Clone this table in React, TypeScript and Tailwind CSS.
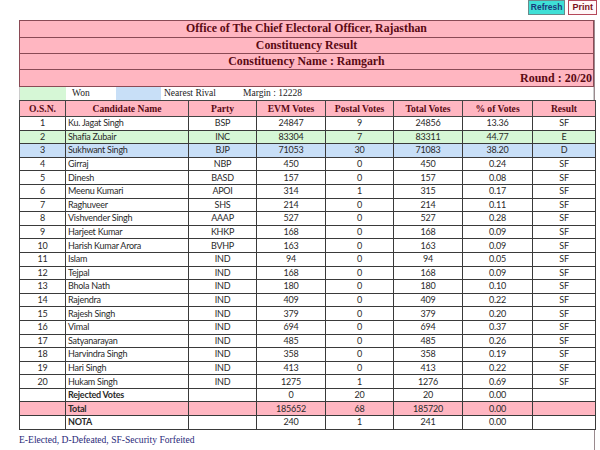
import React from "react";

type Row = [number, string, string, number, number, number, string, string];

const rows: Row[] = [
  [1, "Ku. Jagat Singh", "BSP", 24847, 9, 24856, "13.36", "SF"],
  [2, "Shafia Zubair", "INC", 83304, 7, 83311, "44.77", "E"],
  [3, "Sukhwant Singh", "BJP", 71053, 30, 71083, "38.20", "D"],
  [4, "Girraj", "NBP", 450, 0, 450, "0.24", "SF"],
  [5, "Dinesh", "BASD", 157, 0, 157, "0.08", "SF"],
  [6, "Meenu Kumari", "APOI", 314, 1, 315, "0.17", "SF"],
  [7, "Raghuveer", "SHS", 214, 0, 214, "0.11", "SF"],
  [8, "Vishvender Singh", "AAAP", 527, 0, 527, "0.28", "SF"],
  [9, "Harjeet Kumar", "KHKP", 168, 0, 168, "0.09", "SF"],
  [10, "Harish Kumar Arora", "BVHP", 163, 0, 163, "0.09", "SF"],
  [11, "Islam", "IND", 94, 0, 94, "0.05", "SF"],
  [12, "Tejpal", "IND", 168, 0, 168, "0.09", "SF"],
  [13, "Bhola Nath", "IND", 180, 0, 180, "0.10", "SF"],
  [14, "Rajendra", "IND", 409, 0, 409, "0.22", "SF"],
  [15, "Rajesh Singh", "IND", 379, 0, 379, "0.20", "SF"],
  [16, "Vimal", "IND", 694, 0, 694, "0.37", "SF"],
  [17, "Satyanarayan", "IND", 485, 0, 485, "0.26", "SF"],
  [18, "Harvindra Singh", "IND", 358, 0, 358, "0.19", "SF"],
  [19, "Hari Singh", "IND", 413, 0, 413, "0.22", "SF"],
  [20, "Hukam Singh", "IND", 1275, 1, 1276, "0.69", "SF"],
];

const cols = ["O.S.N.", "Candidate Name", "Party", "EVM Votes", "Postal Votes", "Total Votes", "% of Votes", "Result"];
const widths = ["w-[46px]", "w-[123px]", "w-[68px]", "w-[69px]", "w-[68px]", "w-[69px]", "w-[70px]", "w-[63px]"];

const cell =
  "border border-[#3a3a3a] h-[13.6px] p-0 leading-[12px] text-[9px] tracking-[-0.25px] text-[#2a2a2a] font-['Lato',sans-serif]";

const App = () => {
  return (
    <div className="relative w-[600px] h-[450px] bg-white overflow-hidden">
      {/* buttons */}
      <div className="flex justify-end gap-[3px] pr-[3px] h-[20px] items-start">
        <button className="h-[15px] px-[2px] bg-[#3fe0d6] border border-[#6a8a8a] text-[#1a3a7a] text-[8.5px] leading-[13px] font-bold font-['Liberation_Sans',sans-serif]">
          Refresh
        </button>
        <button className="h-[15px] px-[3px] bg-[#fff7f8] border border-[#b5485a] text-[#7a1020] text-[9px] leading-[13px] font-bold font-['Liberation_Sans',sans-serif]">
          Print
        </button>
      </div>

      <div className="ml-[19px] w-[576px] border-r border-[#9a8a8e] h-[430px]">
        {/* title block */}
        <div className="bg-[#ffb6c1] border border-[#8a4a55] font-['Liberation_Serif',serif] font-bold text-[#5a0a14]">
          <div className="h-[17px] flex items-center justify-center text-[11.8px] border-b border-[#8a4a55]">
            Office of The Chief Electoral Officer, Rajasthan
          </div>
          <div className="h-[16px] flex items-center justify-center text-[11.8px] border-b border-[#8a4a55]">
            Constituency Result
          </div>
          <div className="h-[16px] flex items-center justify-center text-[11.8px] border-b border-[#8a4a55]">
            Constituency Name : Ramgarh
          </div>
          <div className="h-[16px] flex items-center justify-end pr-[1px] text-[12px]">
            Round : 20/20
          </div>
        </div>

        {/* legend */}
        <div className="h-[13px] flex items-center font-['Liberation_Serif',serif] text-[9.5px] text-[#222] border-x border-[#ccc]">
          <div className="w-[46px] h-full bg-[#d6f7d6]" />
          <div className="w-[50px] pl-[6px]">Won</div>
          <div className="w-[45px] h-full bg-[#c8dff7]" />
          <div className="w-[82px] pl-[3px]">Nearest Rival</div>
          <div>Margin : 12228</div>
        </div>

        {/* results */}
        <table className="w-[576px] border-collapse table-fixed text-center">
          <thead>
            <tr className="bg-[#ffb6c1] h-[16px]">
              {cols.map((c, i) => (
                <th
                  key={c}
                  className={`${widths[i]} border border-[#444] p-0 font-['Liberation_Serif',serif] font-bold text-[9.6px] text-[#5a0a14] leading-[14px]`}
                >
                  {c}
                </th>
              ))}
            </tr>
          </thead>
          <tbody>
            {rows.map((r) => {
              const bg =
                r[7] === "E" ? "bg-[#d6f7d6]" : r[7] === "D" ? "bg-[#c8dff7]" : "bg-white";
              return (
                <tr key={r[0]} className={bg}>
                  <td className={cell}>{r[0]}</td>
                  <td className={`${cell} text-left pl-[2px]`}>{r[1]}</td>
                  <td className={cell}>{r[2]}</td>
                  <td className={cell}>{r[3]}</td>
                  <td className={cell}>{r[4]}</td>
                  <td className={cell}>{r[5]}</td>
                  <td className={cell}>{r[6]}</td>
                  <td className={cell}>{r[7]}</td>
                </tr>
              );
            })}
            <tr className="bg-white">
              <td className={cell}></td>
              <td className={`${cell} text-left pl-[2px] font-bold`}>Rejected Votes</td>
              <td className={cell}></td>
              <td className={cell}>0</td>
              <td className={cell}>20</td>
              <td className={cell}>20</td>
              <td className={cell}>0.00</td>
              <td className={cell}></td>
            </tr>
            <tr className="bg-[#ffb6c1]">
              <td className={cell}></td>
              <td className={`${cell} text-left pl-[2px] font-bold`}>Total</td>
              <td className={cell}></td>
              <td className={cell}>185652</td>
              <td className={cell}>68</td>
              <td className={cell}>185720</td>
              <td className={cell}>0.00</td>
              <td className={cell}></td>
            </tr>
            <tr className="bg-white">
              <td className={cell}></td>
              <td className={`${cell} text-left pl-[2px] font-bold`}>NOTA</td>
              <td className={cell}></td>
              <td className={cell}>240</td>
              <td className={cell}>1</td>
              <td className={cell}>241</td>
              <td className={cell}>0.00</td>
              <td className={cell}></td>
            </tr>
          </tbody>
        </table>

        <div className="pt-[3px] font-['Liberation_Serif',serif] text-[9.6px] text-[#2a2a7a]">
          E-Elected, D-Defeated, SF-Security Forfeited
        </div>
      </div>
    </div>
  );
};

export default App;
